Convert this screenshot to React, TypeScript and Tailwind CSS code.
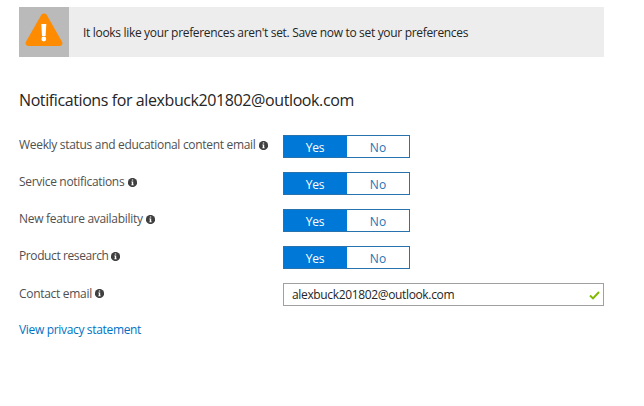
function InfoIcon() {
  return (
    <svg className="ml-[3px] size-[9px] shrink-0" viewBox="0 0 9 9">
      <circle cx="4.5" cy="4.5" r="4.6" fill="#3f3f3f" />
      <path d="M3.8 1.4h1.4v1.2H3.8zM3.3 3.5h1.9v3h.5v.7H3.3v-.7h.5V4.2h-.5z" fill="#fff" />
    </svg>
  );
}

function Toggle() {
  return (
    <div className="flex h-[23px] w-[127px] border border-[#2873ad] text-[12px] leading-[23px]">
      <button className="w-[63px] bg-[#0078d7] pr-px text-center tracking-[-0.2px] text-white">Yes</button>
      <button className="flex-1 bg-white text-center text-[#2474b5]">No</button>
    </div>
  );
}

const rows = [
  { label: 'Weekly status and educational content email', width: 'w-[237px]', tracking: 'tracking-[-0.31px]' },
  { label: 'Service notifications', width: 'w-[106px]', tracking: 'tracking-[-0.31px]' },
  { label: 'New feature availability', width: 'w-[124px]', tracking: 'tracking-[-0.3px]' },
  { label: 'Product research', width: 'w-[89px]', tracking: 'tracking-[-0.4px]' },
];

export default function App() {
  return (
    <main className="h-[406px] w-[644px] overflow-hidden bg-white pl-[19px] pt-[7px] font-['Open_Sans','Noto_Sans',sans-serif] text-[12px] text-[#505050]">
      <div className="flex h-[50px] w-[585px] bg-[#ededed]">
        <div className="flex w-[50px] justify-center bg-[#bababa] pt-[6px]">
          <svg className="h-[34px] w-[38px]" viewBox="0 0 38 34">
            <path d="M16.2 1.9C17.4-.1 20.6-.1 21.8 1.9L36.9 28.4C38.1 30.6 37 33 34.5 33H3.5C1 33-.1 30.6 1.1 28.4Z" fill="#ff8c00" />
            <path d="M16.3 11h5l-.7 12h-3.6z" fill="#fff" />
            <circle cx="18.8" cy="26" r="2.4" fill="#fff" />
          </svg>
        </div>
        <p className="ml-[14px] whitespace-nowrap leading-[51px] tracking-[-0.32px] text-[#252525]">
          It looks like your preferences aren't set. Save now to set your preferences
        </p>
      </div>
      <h1 className="mt-[31px] h-[24px] whitespace-nowrap text-[16px] leading-[24px] tracking-[-0.4px] text-[#252525]">
        Notifications for alexbuck201802@outlook.com
      </h1>
      <div className="mt-[23px] flex flex-col gap-[14px]">
        {rows.map((row) => (
          <div key={row.label} className="flex h-[23px]">
            <div className="flex h-[20px] w-[264px] items-center">
              <span className={`${row.width} ${row.tracking} whitespace-nowrap`}>{row.label}</span>
              <InfoIcon />
            </div>
            <Toggle />
          </div>
        ))}
        <div className="flex h-[23px]">
          <div className="flex h-[21px] w-[264px] items-center">
            <span className="w-[73px] whitespace-nowrap tracking-[-0.3px]">Contact email</span>
            <InfoIcon />
          </div>
          <div className="flex h-[23px] w-[321px] items-center justify-between border border-[#a0a0a0] pl-[8px] pr-[3px]">
            <span className="tracking-[-0.35px] text-[#252525]">alexbuck201802@outlook.com</span>
            <svg className="mt-[2px] h-[9px] w-[11px]" viewBox="0 0 11 9">
              <path d="M1 4.5 4 7.4 10 1" fill="none" stroke="#7fba00" strokeWidth="2" />
            </svg>
          </div>
        </div>
      </div>
      <a className="mt-[15px] block w-[130px] whitespace-nowrap leading-[18px] tracking-[-0.33px] text-[#0072c6]">View privacy statement</a>
    </main>
  );
}
